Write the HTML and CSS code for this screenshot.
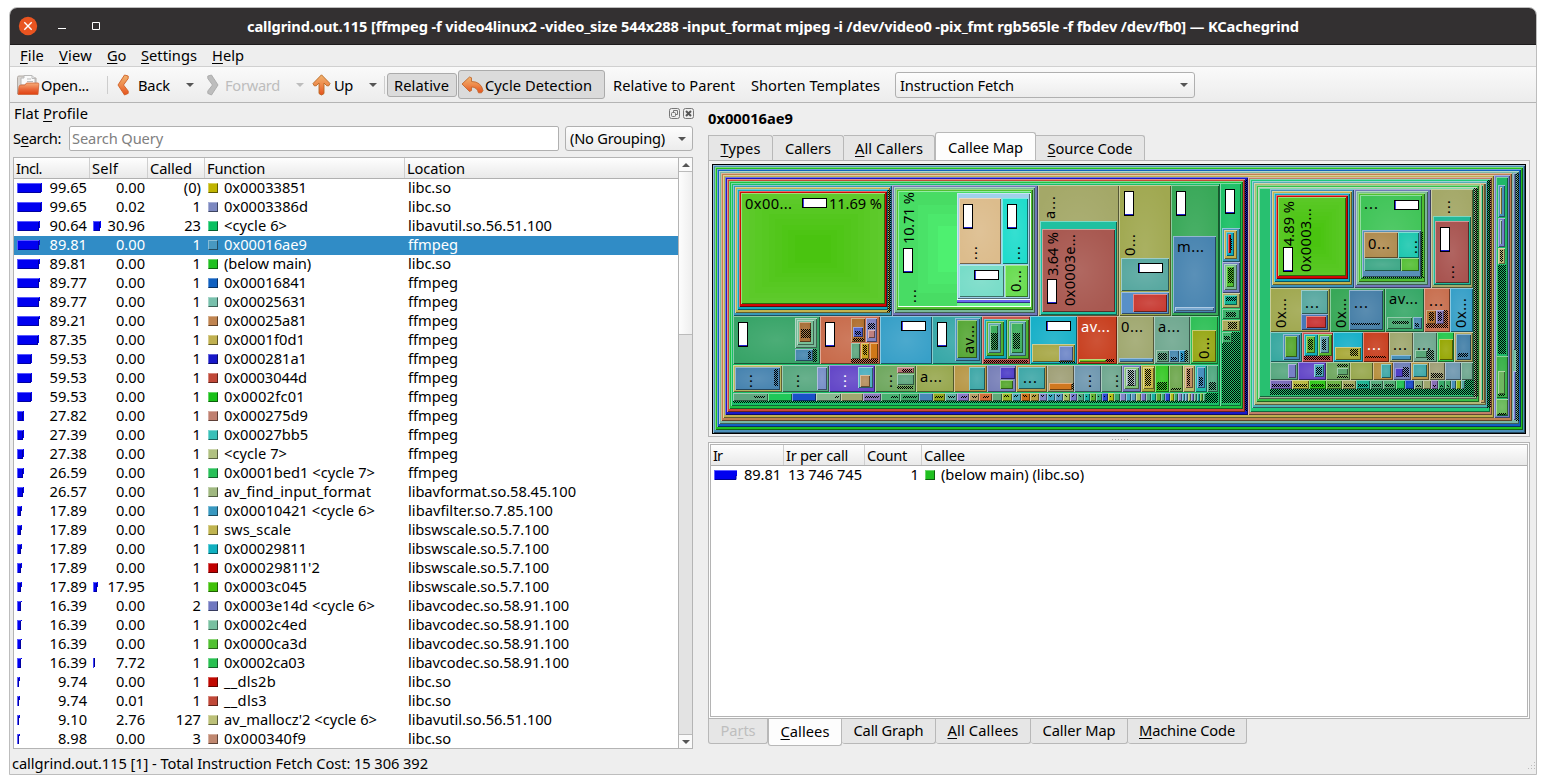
FILE: index.html
```html
<!DOCTYPE html>
<html lang="en">
<head>
<meta charset="utf-8">
<title>KCachegrind</title>
<link rel="stylesheet" href="styles.css">
</head>
<body>
<div class="window">
  <header class="titlebar">
    <div class="controls">
      <svg width="90" height="20" viewBox="0 0 90 20"><circle cx="10" cy="10" r="9.2" fill="#e95420"/><path d="M6.3 6.3l7.4 7.4M13.7 6.3l-7.4 7.4" stroke="#fff" stroke-width="1.4"/><path d="M40 12.5h8M74.500 6.500h7v7h-7z" stroke="#fff" fill="none"/></svg>
    </div>
    <h1><span data-w="1052">callgrind.out.115 [ffmpeg -f video4linux2 -video_size 544x288 -input_format mjpeg -i /dev/video0 -pix_fmt rgb565le -f fbdev /dev/fb0] — KCachegrind</span></h1>
  </header>
  <nav class="menubar">
    <span data-w="24"><u>F</u>ile</span><span data-w="33"><u>V</u>iew</span><span data-w="19"><u>G</u>o</span><span data-w="56"><u>S</u>ettings</span><span data-w="32"><u>H</u>elp</span>
  </nav>
  <div class="toolbar">
    <div class="tool open">
      <svg width="24" height="22" viewBox="0 0 24 22"><defs><linearGradient id="og" x2="0" y2="1"><stop offset="0" stop-color="#f7ad79"/><stop offset=".55" stop-color="#e9683a"/><stop offset="1" stop-color="#e0400f"/></linearGradient><linearGradient id="up" x2="0" y2="1"><stop offset="0" stop-color="#f0b470"/><stop offset=".5" stop-color="#ee8a4c"/><stop offset="1" stop-color="#e5511d"/></linearGradient></defs><path d="M1.500 20V3.500Q1.500 2 3 2H9l1.500 2H20v6" fill="#d8d4d0" stroke="#b2aba5"/><path d="M5 11V4h3V1.500h8l3 3V11z" fill="#fafafa" stroke="#b8b8b8"/><path d="M16 1.500v3h3M11 5h4M11 7.500h6" stroke="#bbb" fill="none"/><path d="M2 20.500l1-8Q3.300 11 5 11h4l1.500-2H22Q23 9 22.800 10.500L22 20.500z" fill="url(#og)" stroke="#cf6336" stroke-width=".8"/></svg>
      <span data-w="48">Open...</span>
    </div>
    <i class="sep"></i>
    <div class="tool back">
      <svg width="13" height="22" viewBox="0 0 13 22"><path d="M7.500 1L1 11l6.500 10 3.700-1.600V17L6.500 11l4.700-6.500V2z" fill="url(#up)" stroke="#d06026" stroke-width=".9" stroke-linejoin="round"/></svg>
      <span data-w="32">Back</span><i class="caret"></i>
    </div>
    <div class="tool fwd">
      <svg width="13" height="22" viewBox="0 0 13 22"><path d="M5.500 1L12 11 5.500 21l-3.700-1.600V17L6.500 11 1.800 4.500V2z" fill="#bdbdbd" stroke="#a9a9a9" stroke-width=".9" stroke-linejoin="round"/></svg>
      <span data-w="55">Forward</span><i class="caret"></i>
    </div>
    <div class="tool up">
      <svg width="19" height="22" viewBox="0 0 19 22"><path d="M9.500.8L18 9.500l-1.200 2.300h-2L12 9v10.500q-2.500 3-5 0V9l-2.800 2.800h-2L1 9.500z" fill="url(#up)" stroke="#b96a25" stroke-width=".9" stroke-linejoin="round"/></svg>
      <span data-w="19">Up</span><i class="caret"></i>
    </div>
    <i class="sep sep2"></i>
    <div class="btn relative"><span data-w="55">Relative</span></div>
    <div class="btn cycle">
      <svg width="23" height="18" viewBox="0 0 23 18"><path d="M1 8L8.500 1l2 .8V5.500Q20 5.500 22 14.500l-1.500 2.300h-3Q16 11 10.500 11v3.500l-2 1z" fill="url(#up)" stroke="#c26a30" stroke-width=".9" stroke-linejoin="round"/></svg>
      <span data-w="107">Cycle Detection</span>
    </div>
    <div class="plain"><span data-w="122">Relative to Parent</span></div>
    <div class="plain shorten"><span data-w="129">Shorten Templates</span></div>
    <div class="combo event"><span data-w="114">Instruction Fetch</span><i class="caret"></i></div>
  </div>

  <main class="content">
    <section class="dock">
      <div class="dockhead"><span data-w="74">Flat <u>P</u>rofile</span>
        <svg width="26" height="12" viewBox="0 0 26 12" fill="none" stroke="#777"><rect x=".5" y=".5" width="10" height="10" rx="2"/><rect x="2.500" y="4.500" width="4" height="4" rx="1"/><path d="M4.500 4V2.500h4v4H7"/><rect x="14.500" y=".5" width="10" height="10" rx="2"/><path d="M17 3l5 5M22 3l-5 5" stroke="#555" stroke-width="2"/></svg>
      </div>
      <div class="searchrow"><label><span data-w="48">S<u>e</u>arch:</span></label><div class="input"><span data-w="91">Search Query</span></div><div class="combo group"><span data-w="95">(No Grouping)</span><i class="caret"></i></div></div>
      <div class="table flat">
        <div class="grid">
          <div class="thead"><b><span data-w="26">Incl.</span></b><b><span data-w="26">Self</span></b><b><span data-w="42">Called</span></b><b><span data-w="58">Function</span></b><b><span data-w="58">Location</span></b></div>
          <div id="rows"></div>
        </div>
        <div class="scroll"><i class="sb-up"></i><i class="thumb"></i><i class="track"></i><i class="sb-down"></i></div>
      </div>
    </section>

    <section class="detail">
      <h2><span data-w="85">0x00016ae9</span></h2>
      <div class="tabs top">
        <div class="tab t1"><span data-w="40"><u>T</u>ypes</span></div><div class="tab t2"><span data-w="46">Callers</span></div><div class="tab t3"><span data-w="68"><u>A</u>ll Callers</span></div><div class="tab t4 on"><span data-w="75">Callee Map</span></div><div class="tab t5"><span data-w="85"><u>S</u>ource Code</span></div>
      </div>
      <div class="frame mapframe"><svg id="map" width="814" height="270" viewBox="712 164 814 270"></svg></div>
      <div class="splitter"></div>
      <div class="frame listframe">
        <div class="table callees">
          <div class="thead"><b><span data-w="9">Ir</span></b><b><span data-w="62">Ir per call</span></b><b><span data-w="40">Count</span></b><b><span data-w="41">Callee</span></b></div>
          <div class="row crow"><div class="c1"><svg width="24" height="10"><path d="M0 0h23v6h-1v4H0z" fill="#0000f0"/><path d="M0 .5h23M.5 0v10" stroke="#5f5fff"/><path d="M1 9.500h21v-4" fill="none" stroke="#000090"/></svg><span data-w="37">89.81</span></div><div class="c2"><span data-w="74">13 746 745</span></div><div class="c3"><span>1</span></div><div class="c4"><i class="sw" style="background:#20c020"></i><span data-w="143">(below main) (libc.so)</span></div></div>
        </div>
      </div>
      <div class="tabs bottom">
        <div class="tab b1 off"><span data-w="35">Pa<u>r</u>ts</span></div><div class="tab b2 on"><span data-w="49"><u>C</u>allees</span></div><div class="tab b3"><span data-w="70">Call Graph</span></div><div class="tab b4"><span data-w="71"><u>A</u>ll Callees</span></div><div class="tab b5"><span data-w="73">Caller Map</span></div><div class="tab b6"><span data-w="96"><u>M</u>achine Code</span></div>
      </div>
    </section>
  </main>
  <footer><span data-w="416">callgrind.out.115 [1] - Total Instruction Fetch Cost: 15 306 392</span><svg width="10" height="10" viewBox="0 0 10 10"><path d="M8 1h1v1H8zM5 4h1v1H5zM8 4h1v1H8zM2 7h1v1H2zM5 7h1v1H5zM8 7h1v1H8z" fill="#bbb"/></svg></footer>
</div>
<script src="app.js"></script>
</body>
</html>
```
FILE: styles.css
```css
* { box-sizing: border-box; }
body { margin: 0; padding: 7px 9px 9px; background: #fff; font: 14.67px/19px "Noto Sans", sans-serif; color: #000; overflow: hidden; }
.window { width: 1528px; height: 768px; border: 1px solid #bdbdbd; border-radius: 8px 8px 0 0; background: #eee; overflow: hidden; display: flex; flex-direction: column; }
span[data-w] { display: inline-block; white-space: pre; }
u { text-underline-offset: 2px; text-decoration-thickness: 1px; text-decoration-skip-ink: none; }
i { display: block; flex: none; }
svg { display: block; flex: none; }
.titlebar { height: 37px; background: #333031; border-bottom: 1px solid #1d1b1c; display: grid; grid-template-columns: 237px 1fr; align-items: center; color: #fff; flex: none; }
.controls { padding-left: 8px; }
h1, h2 { margin: 0; font-size: 14.67px; line-height: 19px; font-weight: 700; }
.menubar { height: 22px; padding: 1px 0 0 10px; display: flex; gap: 15px; border-bottom: 1px solid #d0d0d0; flex: none; }
.toolbar { height: 36px; background: linear-gradient(#fafafa, #ececec); border-bottom: 1px solid #b4b4b4; display: flex; align-items: center; flex: none; }
.toolbar span { margin-top: 2px; }
.tool { display: flex; align-items: center; }
.open { padding-left: 6px; width: 97px; gap: 1px; }
.sep { width: 1px; height: 18px; background: #cdcdcd; }
.back { padding-left: 9px; width: 97px; gap: 8px; }
.fwd { padding-left: 1px; width: 107px; gap: 6px; color: #bdbdbd; }
.up { width: 72px; gap: 3px; }
.caret { border: 4px solid transparent; border-top: 4px solid #555; border-bottom: 0; }
.tool .caret { margin-left: auto; margin-right: 11px; }
.tool.fwd .caret { border-top-color: #bdbdbd; margin-right: 8px; }
.tool.up .caret { margin-right: 7px; }
.btn { border: 1px solid #ababab; border-radius: 3px; background: #dbdbdb; display: flex; align-items: center; }
.relative { margin-left: 2px; width: 70px; height: 24px; padding-left: 6px; }
.cycle { margin-left: 1px; width: 147px; height: 29px; padding-left: 2px; gap: 1px; }
.plain { margin-left: 8px; width: 138px; }
.plain.shorten { margin-left: 0; width: 144px; }
.combo { border: 1px solid #b0b0b0; border-radius: 3px; background: linear-gradient(#fdfdfd, #ececec); height: 26px; display: flex; align-items: center; justify-content: space-between; padding: 0 6px 0 4px; }
.event { width: 300px; }
.content { display: grid; grid-template-columns: 693px 1fr; height: 646px; flex: none; }
.dock { padding-left: 3px; width: 683px; }
.dockhead { height: 22px; padding: 0 0 1px 1px; display: flex; justify-content: space-between; align-items: center; }
.dockhead svg { margin-right: -2px; }
.searchrow { display: flex; height: 32px; align-items: flex-start; padding-top: 1px; }
label { width: 56px; padding-top: 3px; }
.input { width: 490px; height: 25px; border: 1px solid #b0b0b0; border-radius: 2px; background: #fff; color: #808080; padding: 2px; margin-right: 6px; }
.group { width: 128px; height: 25px; }
.table { background: #fff; border: 1px solid #b4b4b4; }
.flat { width: 680px; height: 592px; display: grid; grid-template-columns: 664px 14px; }
.grid { min-height: 0; overflow: hidden; }
.thead { height: 21px; display: grid; background: linear-gradient(#fefefe, #e9e9e9); border-bottom: 1px solid #b0b0b0; }
.flat .thead, .flat .row { grid-template-columns: 76px 58px 57px 200px 1fr; }
.thead b { font-weight: 400; border-right: 1px solid #cfcfcf; padding-left: 2px; padding-top: 1px; }
.thead b:last-child { border-right: 0; }
.row { display: grid; height: 19px; }
.row > div { display: flex; align-items: center; min-width: 0; white-space: nowrap; padding-bottom: 1px; }
.row span { margin-top: -1px; }
.row.sel { background: #308cc6; color: #fff; }
.num { justify-content: space-between; padding: 0 3px; }
.num.self { padding-left: 3px; }
.cnt { justify-content: flex-end; padding-right: 4px; }
.fn { gap: 6px; padding-left: 3px; }
.loc { padding-left: 3px; }
.sw { width: 10px; height: 10px; border: 1px solid rgba(0,0,0,.5); border-top-color: rgba(255,255,255,.35); border-left-color: rgba(255,255,255,.35); }
.scroll { border-left: 1px solid #b4b4b4; background: #e3e3e3; display: grid; grid-template-rows: 14px 163px 1fr 14px; }
.sb-up, .sb-down { background: #fafafa; display: flex; align-items: center; justify-content: center; }
.sb-up::before { content: ""; border: 4px solid transparent; border-top: 0; border-bottom: 4px solid #555; }
.sb-down::before { content: ""; border: 4px solid transparent; border-bottom: 0; border-top: 4px solid #555; }
.sb-up { border-bottom: 1px solid #bbb; }
.thumb { background: linear-gradient(90deg, #fdfdfd, #eee); border-bottom: 1px solid #bbb; }
.sb-down { border-top: 1px solid #bbb; }
.detail { padding-left: 5px; padding-top: 6px; }
h2 { height: 23px; }
.tabs { display: flex; }
.tabs.top { height: 28px; align-items: flex-end; }
.tabs.bottom { height: 28px; align-items: flex-start; }
.tab { height: 25px; border: 1px solid #b8b8b8; border-left-width: 0; background: #e6e6e6; display: flex; align-items: center; justify-content: center; }
.top .tab { border-bottom: 0; border-radius: 0 3px 0 0; }
.top .tab.on span { margin-top: 1px; }
.bottom .tab { border-top: 0; border-radius: 0 0 3px 3px; padding-bottom: 1px; }
.tab.on { background: #fdfdfd; height: 28px; border-left-width: 1px; border-radius: 3px 3px 0 0; }
.bottom .tab.on { height: 27px; border-radius: 0 0 3px 3px; }
.off { color: #bebebe; }
.t1 { width: 65px; border-left-width: 1px; } .t2 { width: 71px; } .t3 { width: 91px; } .t4 { width: 101px; } .t5 { width: 109px; }
.b1 { width: 60px; border-left-width: 1px; } .b2 { width: 74px; } .b3 { width: 94px; } .b4 { width: 95px; } .b5 { width: 97px; } .b6 { width: 119px; }
.frame { width: 822px; border: 1px solid #b4b4b4; }
.mapframe { height: 277px; padding: 3px; background: #f2f2f2; }
.splitter { height: 5px; background: repeating-linear-gradient(90deg, #aaa 0 1px, transparent 1px 3px) 404px 2px / 17px 1px no-repeat; }
.listframe { height: 277px; padding: 1px; background: #fdfdfd; }
.callees { height: 273px; }
.callees .thead, .crow { grid-template-columns: 73px 81px 57px 1fr; }
.crow .c1 { padding-left: 3px; gap: 6px; }
.crow .c2 { padding-left: 4px; }
.crow .c3 { justify-content: flex-end; padding-right: 3px; }
.crow .c4 { padding-left: 3px; gap: 6px; }
footer { padding: 5px 0 0 2px; display: flex; justify-content: space-between; }
footer svg { margin-top: 7px; }
#map text { font: 14.67px "Noto Sans", sans-serif; }
```
FILE: app.js
```js
// Flat profile: inclusive, self, called, swatch, function, width, location
const LOC = { 'libc.so': 43, 'ffmpeg': 50, 'libavutil.so.56.51.100': 144, 'libavformat.so.58.45.100': 168, 'libavfilter.so.7.85.100': 145, 'libswscale.so.5.7.100': 141, 'libavcodec.so.58.91.100': 161 };
const A = 'libc.so', F = 'ffmpeg', U = 'libavutil.so.56.51.100', S = 'libswscale.so.5.7.100', C = 'libavcodec.so.58.91.100';
const data = [
 ['99.65','0.00','(0)','#c0b400','0x00033851',83,A],
 ['99.65','0.02','1','#7c88c0','0x0003386d',84,A],
 ['90.64','30.96','23','#08c060','<cycle 6>',63,U],
 ['89.81','0.00','1','#4898c0','0x00016ae9',83,F],
 ['89.81','0.00','1','#20c020','(below main)',87,A],
 ['89.77','0.00','1','#1060c0','0x00016841',83,F],
 ['89.77','0.00','1','#78c0ac','0x00025631',83,F],
 ['89.21','0.00','1','#c08450','0x00025a81',83,F],
 ['87.35','0.00','1','#c0b050','0x0001f0d1',81,F],
 ['59.53','0.00','1','#1818c8','0x000281a1',83,F],
 ['59.53','0.00','1','#c04838','0x0003044d',83,F],
 ['59.53','0.00','1','#18c018','0x0002fc01',81,F],
 ['27.82','0.00','1','#c08070','0x000275d9',84,F],
 ['27.39','0.00','1','#38c0b8','0x00027bb5',84,F],
 ['27.38','0.00','1','#b0c080','<cycle 7>',63,F],
 ['26.59','0.00','1','#28c058','0x0001bed1 <cycle 7>',151,F],
 ['26.57','0.00','1','#a0b880','av_find_input_format',147,'libavformat.so.58.45.100'],
 ['17.89','0.00','1','#3898c0','0x00010421 <cycle 6>',151,'libavfilter.so.7.85.100'],
 ['17.89','0.00','1','#c0b450','sws_scale',67,S],
 ['17.89','0.00','1','#10b0c0','0x00029811',83,S],
 ['17.89','0.00','1','#c00000',"0x00029811'2",96,S],
 ['17.89','17.95','1','#40c008','0x0003c045',83,S],
 ['16.39','0.00','2','#7078c0','0x0003e14d <cycle 6>',151,C],
 ['16.39','0.00','1','#78c0a0','0x0002c4ed',83,C],
 ['16.39','0.00','1','#50c030','0x0000ca3d',83,C],
 ['16.39','7.72','1','#28c050','0x0002ca03',81,C],
 ['9.74','0.00','1','#c00800','__dls2b',52,A],
 ['9.74','0.01','1','#c04838','__dls3',43,A],
 ['9.10','2.76','127',"#bcc078","av_mallocz'2 <cycle 6>",153,U],
 ['8.98','0.00','3','#c08870','0x000340f9',82,A]
];
const esc = s => s.replace(/</g, '&lt;');
const span = (s, w) => `<span data-w="${w}">${esc(s)}</span>`;
function bar(v) {
  v = +v;
  const w = v * .25;
  if (v < 5) return '<i></i>';
  const full = Math.floor(w), h = Math.round((w - full) * 10);
  if (full < 2) return `<svg width="3" height="10"><path d="M.5 0v10" stroke="#4040ff"/><path d="M1.500 0v9" stroke="#000090"/></svg>`;
  return `<svg width="${full + 1}" height="10"><path d="M0 0h${full + 1}v${h}h-1V10H0z" fill="#0000f0"/><path d="M0 .5h${full}M.5 0v10" stroke="#5a5aff"/><path d="M1 9.500h${full - 1}M${full - .5} 1v9" stroke="#0000a0"/></svg>`;
}
const nw = v => v.length === 4 ? 29 : 37.500;
document.getElementById('rows').innerHTML = data.map((r, i) =>
  `<div class="row${i === 3 ? ' sel' : ''}"><div class="num">${bar(r[0])}${span(r[0], nw(r[0]))}</div><div class="num self">${bar(r[1])}${span(r[1], nw(r[1]))}</div><div class="cnt"><span>${r[2]}</span></div><div class="fn"><i class="sw" style="background:${r[3]}"></i>${span(r[4], r[5])}</div><div class="loc">${span(r[6], LOC[r[6]])}</div></div>`).join('');

// Distribute tracking so that every label fills its declared width
document.querySelectorAll('[data-w]').forEach(e => {
  const w = +e.dataset.w, n = e.textContent.length;
  e.style.letterSpacing = ((w - e.getBoundingClientRect().width) / n).toFixed(3) + 'px';
  e.style.width = w + 'px';
});

// Callee treemap
let out = '<defs><pattern id="h" width="2" height="2" patternUnits="userSpaceOnUse"><path d="M0 0h1v1H0zM1 1h1v1H1z" fill="#000"/></pattern><radialGradient id="g" r=".6"><stop offset="0" stop-color="#fff" stop-opacity=".1"/><stop offset="1" stop-color="#fff" stop-opacity="0"/></radialGradient></defs><g shape-rendering="crispEdges">';
let labels = '';
function r(a, b, c, d, col, glow) {
  const w = c - a, h = d - b;
  out += `<rect x="${a}" y="${b}" width="${w}" height="${h}" fill="${col}"/>`;
  if (glow !== 0 && w > 8 && h > 8) out += `<rect x="${a + 1}" y="${b + 1}" width="${w - 2}" height="${h - 2}" fill="url(#g)"/>`;
  out += `<path d="M${a} ${b}h${w}v1H${a + 1}v${h - 1}h-1z" fill="#fff" fill-opacity=".42"/><path d="M${c} ${b + 1}v${h - 1}H${a + 1}v-1h${w - 2}v-${h - 2}z" fill="#000" fill-opacity=".48"/>`;
}
// concentric steps from the edge colour towards the centre colour
function steps(a, b, c, d, from, to) {
  const k = 9, w = c - a, h = d - b;
  for (let i = 0; i < k; i++) {
    const f = i / k * .42, col = from.map((x, j) => Math.round(x + (to[j] - x) * i / (k - 1)));
    out += `<rect x="${Math.round(a + w * f)}" y="${Math.round(b + h * f)}" width="${Math.round(w * (1 - 2 * f))}" height="${Math.round(h * (1 - 2 * f))}" fill="rgb(${col})"/>`;
  }
}
function n(a, b, c, d, ...cols) { cols.forEach((k, i) => r(a + 2 * i, b + 2 * i, c - 3 * i, d - 3 * i, k, i === cols.length - 1 ? 1 : 0)); }
function h(a, b, c, d) { out += `<rect x="${a}" y="${b}" width="${c - a}" height="${d - b}" fill="url(#h)"/>`; }
function meter(x, y, vertical) {
  const w = vertical ? 9 : 24, t = vertical ? 24 : 9;
  out += `<rect x="${x + .5}" y="${y + .5}" width="${w}" height="${t}" fill="#fff" stroke="#000"/>`;
  out += vertical ? `<path d="M${x + 1} ${y + 23.500}h8" stroke="#2020d0"/>` : `<path d="M${x + 1.500} ${y + 1}v8" stroke="#4040f0"/>`;
}
function t(x, y, s, w, col) { labels += `<text x="${x}" y="${y}" textLength="${w}" fill="${col || '#000'}">${s}</text>`; }
function v(x, y, s, w, col) { labels += `<text transform="translate(${x} ${y}) rotate(-90)" textLength="${w}" fill="${col || '#000'}">${s}</text>`; }
// [right edge, colour] cells from x along one strip
function strip(x, y0, y1, list) { list.forEach(([e, c, k]) => { r(x, y0, e, y1, c); if (k) h(x + 2, y1 - k - 1, e - 2, y1 - 2); x = e; }); }

out += '<rect x="712" y="164" width="814" height="270" fill="#000"/>';
r(713,165,1525,433,'#4b8fb9',0); r(715,167,1523,430,'#20c020',0); r(717,169,1521,427,'#1060c0',0); r(719,171,1519,424,'#78b8a4',0);
h(1516,173,1519,421);
r(1513,173,1516,350,'#6078a8',0); r(1513,371,1516,420,'#7888d8',0);
r(721,173,1512,421,'#c08050',0); r(723,175,1494,418,'#c0b050',0);
r(1494,175,1510,418,'#7480c8',0); r(1496,177,1508,416,'#20b868',0);
n(1498,185,1505,217,'#4890b8','#c0b450'); n(1498,218,1505,247,'#7480c8','#70b898'); r(1498,248,1505,264,'#b8b878'); h(1500,250,1503,262);
h(1498,265,1506,354); r(1496,356,1508,398,'#38b048'); r(1498,371,1505,394,'#70b860'); h(1498,394,1505,396); r(1496,399,1508,415,'#68b858'); h(1498,413,1506,415);
// main branch
r(725,177,1248,415,'#1818c8',0); h(1244,180,1247,411); r(727,179,1245,412,'#c84838',0); h(1241,183,1243,407);
r(729,181,1243,409,'#20c040',0); r(731,183,1220,406,'#18c068',0);
r(733,185,892,316,'#3898b8',0); r(735,187,890,313,'#c0b450',0); h(887,190,891,312); r(737,189,888,310,'#10a8c0',0); r(739,191,887,307,'#d00808',0); r(741,193,885,304,'#58c420',0);
steps(742,194,884,303,[94,202,44],[74,196,16]);
t(745,209,'0x00...',47); meter(802,198); t(829,209,'11.69 %',53);
r(892,185,1038,316,'#7078b8',0); r(894,187,1035,313,'#78b898',0); r(896,189,1033,310,'#50c030',0); r(898,191,1031,307,'#48dc64',0);
out += '<rect x="918" y="205" width="39" height="88" fill="#4ae268"/><rect x="928" y="214" width="29" height="70" fill="#4ce86c"/><rect x="938" y="226" width="19" height="46" fill="#4ef070"/>';
out += '<path d="M957 299h73V193h1v114H898v-1h59z" fill="#f4fff8"/><rect x="957" y="300" width="73" height="2" fill="#6868f0"/><rect x="957" y="302" width="73" height="1" fill="#303088"/><rect x="957" y="303" width="73" height="3" fill="#70f090"/>';
r(957,193,1030,299,'#a0d0ec',0); r(959,198,1001,264,'#dcbc8c'); r(1002,198,1028,264,'#20dccc'); r(959,265,1004,297,'#78dcc8'); r(1005,265,1028,297,'#68dc50');
v(914,244,'10.71 %',52); meter(903,248,1); v(916,303,'...',14);
meter(963,204,1); v(977,260,'...',14); meter(1007,204,1); v(1020,260,'...',14); meter(974,270); v(1021,292,'0...',22);
r(1038,185,1119,316,'#a4a868'); r(1040,221,1117,315,'#20c0a0',0); r(1042,229,1115,312,'#a85850');
v(1055,219,'a...',23); v(1058,276,'3.64 %',44); meter(1047,279,1); v(1075,306,'0x0003e...',72);
r(1119,185,1171,316,'#a0a850'); r(1121,258,1169,291,'#58a8a0'); r(1121,292,1169,314,'#5890c8',0); r(1133,294,1167,312,'#c83c34');
meter(1124,191,1); v(1135,256,'0...',22); meter(1138,263);
r(1171,185,1219,316,'#38a858'); r(1173,236,1216,313,'#4884b0'); r(1175,307,1214,311,'#78a8d0',0); meter(1176,191,1); t(1177,252,'m...',27);
// row two
r(733,316,820,364,'#38a468'); meter(738,322,1); n(795,318,817,348,'#78b898','#78c098','#a87038'); h(801,329,811,338); r(795,349,813,361,'#4888b0'); h(808,351,811,359); h(813,349,817,362);
r(820,316,880,364,'#c86c4c'); meter(825,322,1); r(851,318,865,342,'#b07030'); r(853,327,863,337,'#5060c8'); h(855,331,861,335); h(853,338,864,341); r(866,318,877,342,'#8080c0'); h(868,323,875,329); r(868,330,875,338,'#c08080'); r(851,343,860,359,'#60a880'); r(861,343,869,359,'#c8a020'); h(863,345,867,355); r(870,343,878,359,'#d07818'); h(851,359,878,363);
r(880,316,932,364,'#38a0c8'); meter(901,321);
r(932,316,982,364,'#38a8a8'); meter(937,322,1); n(955,318,980,361,'#4890c0','#58a838'); v(974,354,'av...',29);
r(982,316,1030,364,'#c85850',0); n(984,319,1007,359,'#10a8b8','#50b030','#60a8b0','#40b060'); h(991,333,998,349); n(1007,319,1029,359,'#50b030','#60a8b0','#40b060'); h(1013,333,1020,349); h(984,360,1028,363);
r(1030,316,1077,364,'#18b0c8'); meter(1046,321); r(1032,344,1075,362,'#a8a848'); r(1059,346,1073,361,'#7088c8'); h(1059,361,1075,363);
r(1077,316,1117,364,'#c84020'); t(1081,332,'av...',29,'#fff'); r(1079,359,1106,362,'#80c820',0); h(1106,359,1114,362);
r(1117,316,1154,364,'#a0a870'); t(1121,332,'0...',22); r(1119,358,1153,362,'#5090c0',0);
r(1154,316,1190,364,'#70a890'); t(1158,332,'a...',22); strip(1156,350,362,[[1169,'#60a080',8],[1179,'#4888b0',4],[1185,'#3098c8',8]]); h(1185,350,1188,362);
r(1190,316,1218,364,'#30c058'); r(1192,330,1216,362,'#98a818'); v(1209,359,'0...',22);
// row three
strip(733,365,392,[[782,'#b8b860'],[829,'#58a880'],[875,'#6448c8'],[916,'#70a860'],[954,'#98a850'],[987,'#b89848'],[1016,'#7880b8'],[1047,'#b89848'],[1074,'#a0a078'],[1101,'#7098b0'],[1122,'#70a890'],[1141,'#7078b8'],[1155,'#a8a838'],[1169,'#38c828',9],[1183,'#70a850',3],[1195,'#b8b868'],[1207,'#20b8a8'],[1218,'#50a880',9]]);
r(735,367,780,390,'#4884b0'); h(774,369,778,386); r(817,367,827,390,'#7890c8'); r(858,367,873,388,'#50b0c0'); r(860,375,870,387,'#b89060'); r(897,367,914,373,'#b87878'); h(902,369,912,372); r(897,374,914,385,'#60a880'); h(897,386,913,389);
r(969,367,985,390,'#40a8a8'); r(1000,367,1015,379,'#5040c8'); r(1000,380,1013,389,'#58a830'); r(1018,367,1045,389,'#40a8a8'); r(1049,383,1072,390,'#d07820'); h(1072,383,1074,390); n(1124,367,1139,389,'#80c078','#a0b8b8'); h(1128,370,1134,386); n(1143,367,1154,389,'#c8b848'); h(1145,369,1151,386); r(1185,367,1193,388,'#c09068'); h(1187,369,1190,386); r(1197,367,1205,388,'#4890c0'); h(1199,377,1203,386);
[752,799].forEach(x => v(x,388,'...',14)); v(846,388,'...',14,'#fff'); v(892,388,'...',14); t(920,382,'a...',22); t(1023,383,'...',14); v(1091,388,'...',14); v(1118,388,'...',14);
const small = ['#60a880','#20c858','#1850c8','#88b890','#a0a870','#8878b8','#48b070','#40a868','#4888b8','#90a820','#60b0a0','#8878c8','#b8a068','#d07038','#60a878','#98b828','#50a8b8','#c87018','#b8a040'];
const edges = [768,792,816,841,863,881,900,919,933,945,957,969,979,992,1002,1012,1021,1030,1039,1047,1055,1063,1070,1077,1084,1090,1096,1102,1108,1114,1120,1126,1131,1136,1141,1146,1151,1156,1161,1165,1170,1174,1178,1182,1185,1188,1191,1194,1197,1200,1203,1206];
const mix = ['#50a880','#18b0a0','#60b030','#38b078','#2848d0','#b0c018','#38a868','#8088c8','#40a8c0','#5898c0','#a0c060','#7078c8'];
// [from, to] stippled remainder inside the wider cells
const dots = { 0: [754,765], 3: [835,839], 5: [865,879], 6: [891,898], 7: [903,917], 9: [935,943], 10: [948,955], 11: [961,967], 12: [972,977], 13: [983,989] };
let px = 733;
edges.forEach((e, i) => {
  r(px,393,e,401,small[i] || mix[i % 12]);
  if (dots[i]) h(dots[i][0],396,dots[i][1],398);
  else if (i > 14 && i < 30) h(px + 2,395,e - 3,397);
  px = e;
});
h(1206,393,1218,401); h(733,401,1218,403);
// narrow column
r(1220,183,1241,406,'#20c068'); meter(1225,189,1); n(1222,228,1240,262,'#4098b8','#c0b050','#10a8c0','#c80808'); h(1230,238,1232,250); n(1222,262,1240,293,'#7480c0','#78b898','#50c030'); h(1228,268,1233,283); n(1222,293,1240,308,'#b0b068','#10b090'); h(1226,297,1236,301); r(1222,309,1240,319,'#38b068'); h(1226,312,1236,317); r(1222,320,1240,331,'#a8a858'); h(1228,322,1237,329); r(1222,332,1232,343,'#38b068'); h(1224,336,1230,340); h(1232,332,1240,343); h(1222,343,1240,403);
// second branch
r(1248,177,1492,415,'#c08068',0); r(1250,179,1490,412,'#20c878',0); r(1252,181,1488,408,'#50b0b8',0); h(1487,180,1491,408); r(1254,183,1486,405,'#b0b878',0); r(1480,183,1485,403,'#c0a068',0); r(1481,185,1483,400,'#20c868',0); r(1256,185,1479,402,'#38c048',0); r(1258,187,1477,399,'#98b890',0); h(1474,188,1478,397); r(1259,188,1474,397,'#28c070',0);
r(1270,189,1354,288,'#4090b8',0); r(1272,191,1352,285,'#c0b450',0); r(1274,193,1350,282,'#10a8c0',0); r(1276,195,1348,279,'#d00808',0); r(1278,197,1346,276,'#54c41c',0);
steps(1279,198,1345,275,[90,200,38],[74,196,16]);
v(1294,246,'4.89 %',45); meter(1283,247,1); v(1311,272,'0x0003...',64);
n(1354,189,1431,288,'#7078b8','#78b898','#50c030','#40c458'); h(1420,232,1423,276); h(1362,276,1424,278); r(1362,230,1421,277,'#5890b8',0); r(1364,232,1398,258,'#b08c50'); r(1398,232,1419,258,'#20c8b0'); r(1364,258,1401,271,'#40a888'); r(1401,258,1419,271,'#58c038'); t(1364,209,'...',14); meter(1394,200); t(1368,249,'0...',22); v(1417,254,'...',14);
r(1431,189,1473,288,'#a4a868'); r(1433,216,1471,285,'#20b898'); r(1435,221,1469,283,'#a85450'); v(1450,214,'...',14); meter(1440,227,1); v(1454,279,'...',14);
strip(1270,288,332,[[1330,'#a0a850'],[1385,'#38a858'],[1424,'#38a868'],[1450,'#c87050'],[1473,'#38a0c8']]);
r(1301,290,1328,314,'#58a8a0'); r(1301,314,1328,330,'#4878b8',0); r(1306,316,1326,328,'#c83434'); r(1349,290,1383,330,'#4880a8'); h(1351,323,1380,325); r(1387,317,1412,329,'#48a870'); h(1392,321,1409,324); r(1413,317,1422,329,'#4888b0'); h(1415,323,1419,327); r(1426,310,1436,324,'#b07030'); h(1429,312,1434,321); r(1436,310,1444,324,'#8878b8'); h(1438,312,1442,321); h(1444,310,1448,328); h(1426,324,1448,328);
v(1286,328,'0x...',30); t(1305,308,'...',14); v(1346,328,'0x...',30); t(1354,308,'...',14); t(1389,304,'av...',29); t(1429,306,'...',14); v(1466,328,'0x...',30);
strip(1270,332,362,[[1302,'#38a8a0'],[1333,'#c85050'],[1363,'#18b0c8'],[1389,'#c84020'],[1413,'#a0a870'],[1437,'#70a890'],[1454,'#28c850'],[1473,'#b0a860']]);
n(1283,334,1300,360,'#4888b8','#58a830'); n(1304,334,1318,356,'#10b0b8','#60b830'); h(1308,339,1313,350); n(1318,334,1332,356,'#58b830','#60a0b0'); h(1322,339,1326,350); h(1304,356,1330,360); r(1335,347,1361,360,'#a8a838'); h(1350,349,1358,356); h(1365,356,1386,358); r(1391,355,1411,360,'#4890b8'); r(1415,350,1427,358,'#58a878'); h(1427,350,1434,360); r(1439,339,1453,360,'#98a808'); r(1456,334,1471,360,'#4480a8'); h(1458,353,1468,357);
t(1367,350,'...',14,'#fff'); t(1393,350,'...',14); t(1417,350,'...',14);
strip(1270,362,380,[[1298,'#58a880'],[1326,'#6448c8'],[1350,'#70a860'],[1373,'#98a850'],[1393,'#b89040'],[1411,'#7080b8'],[1429,'#b89848'],[1445,'#a0a078',6],[1461,'#7098b0'],[1473,'#70a890']]);
r(1288,364,1296,378,'#7880c8'); r(1314,364,1324,377,'#48a8b8'); h(1316,367,1322,375); r(1337,368,1348,375,'#60a870'); h(1337,364,1348,367); h(1337,376,1348,378); r(1381,364,1391,378,'#40a8a8'); r(1395,368,1403,377,'#5040c8'); h(1403,367,1409,377); r(1413,364,1427,377,'#40a8a8');
strip(1270,380,389,[[1292,'#7868b8',4],[1309,'#b8b840',4],[1326,'#30c818',4],[1342,'#68b040',4],[1356,'#a0a860',4],[1370,'#18b090',4],[1383,'#50a878',4],[1396,'#50a870',4],[1405,'#20c050'],[1414,'#1848c8'],[1423,'#80a878',3],[1431,'#a0a870'],[1438,'#8870b8',3],[1445,'#38a868',3],[1451,'#40a868',3],[1456,'#4890b8'],[1461,'#98b820'],[1465,'#50a8a0']]);
h(1465,380,1473,389); h(1270,389,1473,395);
document.getElementById('map').innerHTML = out + '</g>' + labels;
```
